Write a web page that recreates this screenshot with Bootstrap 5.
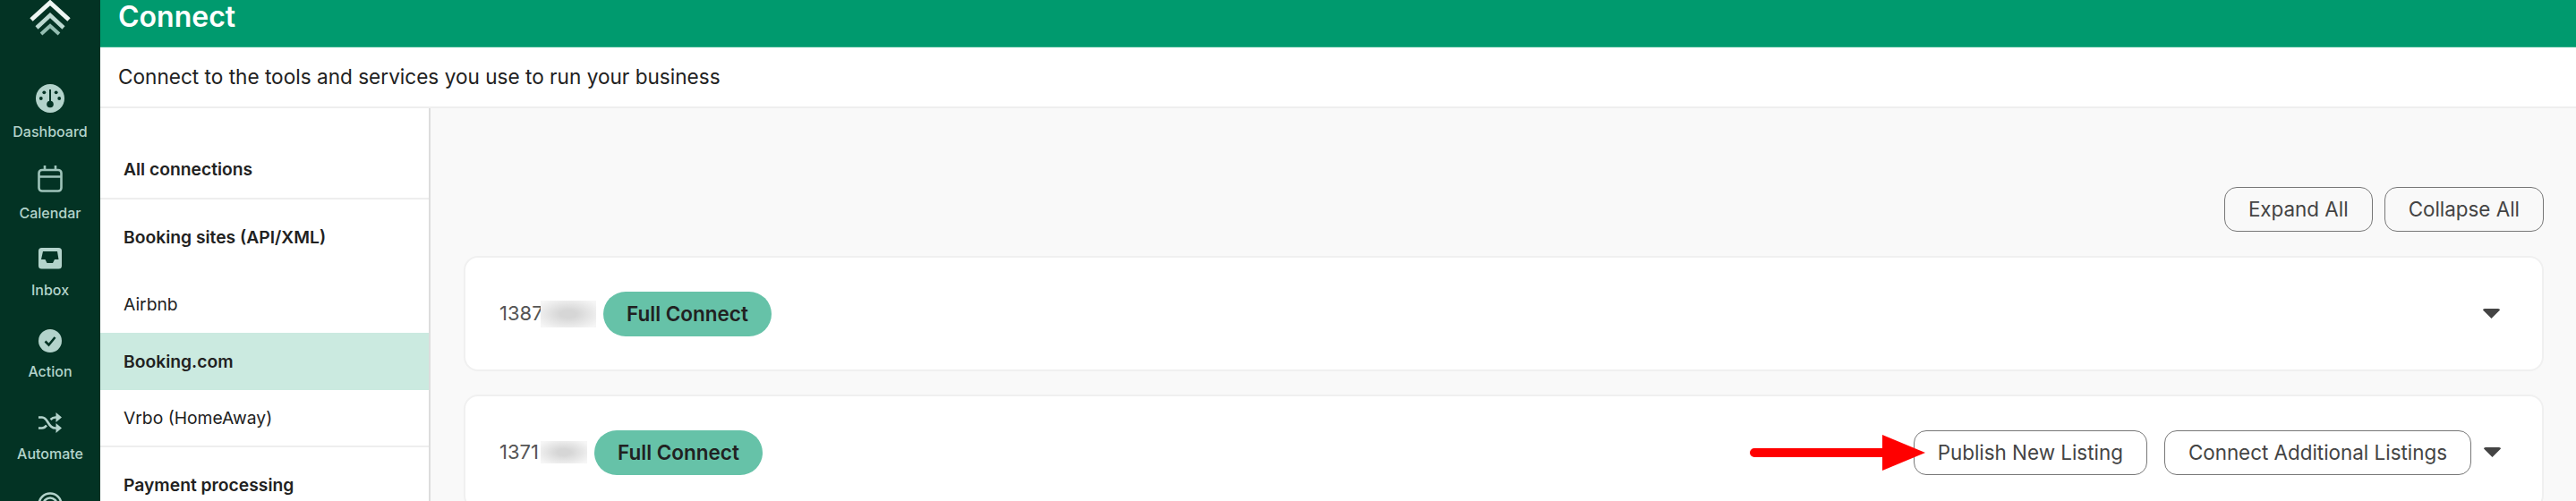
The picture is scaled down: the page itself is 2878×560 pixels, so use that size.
<!DOCTYPE html>
<html lang="en">
<head>
    <meta charset="UTF-8">
    <title>Connect</title>
    <link href="https://cdn.jsdelivr.net/npm/bootstrap@5.3.0/dist/css/bootstrap.min.css" rel="stylesheet">
    <style>
        html, body { height: 100%; overflow: hidden; }
        body { font-family: Inter, "Liberation Sans", sans-serif; color: #212121; background: #fff; }

        .side-rail { width: 112px; background: #033324; color: #b3d3cb; height: 560px; overflow: hidden; }
        .rail-logo { height: 40px; margin-bottom: 54px; }
        .rail-label { font-size: 16px; line-height: 20px; font-weight: 500; white-space: nowrap; }
        .rail-dash .rail-label { margin-top: 11px; }
        .rail-cal { margin-top: 28px; }
        .rail-cal .rail-label { margin-top: 13px; }
        .rail-inbox { margin-top: 29px; }
        .rail-inbox .rail-label { margin-top: 13px; }
        .rail-action { margin-top: 34px; }
        .rail-action .rail-label { margin-top: 11px; }
        .rail-auto { margin-top: 36px; }
        .rail-auto .rail-label { margin-top: 13px; }
        .rail-next { margin-top: 33px; }

        .top-bar { height: 53px; background: #009a6e; border-bottom: 1px solid #35b08c; color: #fff; padding-left: 20px; }
        .top-bar h1 { font-size: 32px; line-height: 38px; font-weight: 600; margin: 0; }
        .sub-bar { height: 68px; padding-left: 20px; font-size: 22.6px; border-bottom: 2px solid #eee; }

        .side-menu { width: 369px; border-right: 2px solid #ddd; font-size: 19.3px; }
        .menu-row { padding: 0 26px; display: flex; align-items: center; }
        .menu-all { height: 102px; padding-top: 36px; font-weight: 600; border-bottom: 2px solid #eee; }
        .menu-head { height: 85px; font-weight: 600; }
        .menu-link { height: 64px; }
        .menu-link.is-active { background: #cbeae0; font-weight: 600; }
        .menu-end { border-bottom: 2px solid #eee; }

        .main-pane { background: #f9f9f9; padding: 88px 36px 0 37px; overflow: hidden; }
        .pane-actions { gap: 13px; }
        .pane-btn { font-size: 22.4px; line-height: 30px; color: #444; border: 1px solid #777; border-radius: 14px; background: transparent; padding: 9px 26px; }
        .pane-btn:hover { color: #444; border-color: #777; }
        .conn-card { border: 2px solid #f0f0f0; border-radius: 16px; padding: 0 47px 0 38px; height: 129px; }
        .conn-first { margin-top: 27px; }
        .conn-second { margin-top: 26px; padding-right: 46px; }
        .conn-id { width: 46px; font-size: 22px; color: #555; white-space: nowrap; }
        .blur-patch { display: block; background: radial-gradient(ellipse at center, #d6d6d6 20%, #f6f6f6 90%); }
        .blur-wide { width: 62px; height: 30px; }
        .blur-short { width: 52px; height: 25px; }
        .type-pill { background: #66c2a8; color: #212121; border-radius: 26px; font-size: 22.5px; font-weight: 600; line-height: 50px; padding: 0 26px; }
        .caret-down { width: 19px; height: 11px; color: #444; }
        .caret-gap { margin-left: 14px; }
        .listing-gap { margin-left: 19px; }
        .red-arrow { right: 100%; top: 5px; margin-right: -13px; }
    </style>
</head>
<body>
    <div class="d-flex">
        <nav class="side-rail d-flex flex-column align-items-center flex-shrink-0">
            <div class="rail-logo">
                <svg width="46" height="40" viewBox="0 0 46 40" fill="none">
                    <path d="M2 22 23 3l21 19" stroke="#eef6f3" stroke-width="5"/>
                    <path d="M8 31 23 17l15 14" stroke="#bcd9d1" stroke-width="4.500"/>
                    <path d="M13 38 23 29l10 9" stroke="#93bdb1" stroke-width="4"/>
                </svg>
            </div>
            <div class="rail-dash d-flex flex-column align-items-center">
                <svg width="32" height="32" viewBox="0 0 32 32">
                    <circle cx="16" cy="16" r="16" fill="#b3d3cb"/>
                    <g fill="#033324">
                        <circle cx="9.3" cy="9.3" r="1.9"/>
                        <circle cx="22.7" cy="9.3" r="1.9"/>
                        <circle cx="5.8" cy="16" r="1.9"/>
                        <circle cx="26.2" cy="16" r="1.9"/>
                        <rect x="15" y="6" width="2" height="15"/>
                        <circle cx="16" cy="22.5" r="3.8"/>
                    </g>
                </svg>
                <span class="rail-label">Dashboard</span>
            </div>
            <div class="rail-cal d-flex flex-column align-items-center">
                <svg width="28" height="30" viewBox="0 0 28 30" fill="none" stroke="#9fc4ba" stroke-width="2.6">
                    <rect x="1.5" y="5" width="25" height="23.5" rx="3.5"/>
                    <path d="M1.5 12.5h25M8 0v5M20 0v5"/>
                </svg>
                <span class="rail-label">Calendar</span>
            </div>
            <div class="rail-inbox d-flex flex-column align-items-center">
                <svg width="26" height="24" viewBox="0 0 26 24">
                    <rect width="26" height="23.5" rx="3.5" fill="#b3d3cb"/>
                    <path d="M5 4h16l1.5 9h-4.500l-2 4H9.500l-2-4H3z" fill="#033324"/>
                </svg>
                <span class="rail-label">Inbox</span>
            </div>
            <div class="rail-action d-flex flex-column align-items-center">
                <svg width="26" height="26" viewBox="0 0 26 26">
                    <circle cx="13" cy="13" r="13" fill="#b3d3cb"/>
                    <path d="M7.500 13.500l4 4 7-8.500" fill="none" stroke="#033324" stroke-width="2.600"/>
                </svg>
                <span class="rail-label">Action</span>
            </div>
            <div class="rail-auto d-flex flex-column align-items-center">
                <svg width="26" height="23" viewBox="0 0 26 23" fill="none" stroke="#b3d3cb" stroke-width="2.600">
                    <path d="M0 5.500h4c3 0 4.500 2 6.500 5.500s4 6.500 8 6.500h2M0 17.500h4c2 0 3.500-1 5-3M13.500 8c1.800-1.800 3.500-2.500 5.500-2.500h2"/>
                    <path d="M19.500 0l6.500 5.500-6.500 5.500zM19.500 12l6.500 5.500-6.500 5.500z" fill="#b3d3cb" stroke="none"/>
                </svg>
                <span class="rail-label">Automate</span>
            </div>
            <div class="rail-next">
                <svg width="28" height="28" viewBox="0 0 28 28" fill="none" stroke="#b3d3cb" stroke-width="2.600">
                    <circle cx="14" cy="14" r="12.500"/>
                    <circle cx="14" cy="14" r="7.500"/>
                </svg>
            </div>
        </nav>

        <div class="flex-grow-1 d-flex flex-column vh-100 overflow-hidden">
            <header class="top-bar flex-shrink-0">
                <h1>Connect</h1>
            </header>
            <div class="sub-bar d-flex align-items-center flex-shrink-0">Connect to the tools and services you use to run your business</div>

            <div class="d-flex flex-grow-1 overflow-hidden">
                <aside class="side-menu flex-shrink-0">
                    <div class="menu-row menu-all">All connections</div>
                    <div class="menu-row menu-head">Booking sites (API/XML)</div>
                    <div class="menu-row menu-link">Airbnb</div>
                    <div class="menu-row menu-link is-active">Booking.com</div>
                    <div class="menu-row menu-link menu-end">Vrbo (HomeAway)</div>
                    <div class="menu-row menu-head">Payment processing</div>
                </aside>

                <main class="main-pane flex-grow-1">
                    <div class="d-flex justify-content-end pane-actions">
                        <button type="button" class="btn pane-btn">Expand All</button>
                        <button type="button" class="btn pane-btn">Collapse All</button>
                    </div>

                    <div class="conn-card conn-first bg-white d-flex align-items-center">
                        <span class="conn-id">1387</span>
                        <span class="blur-patch blur-wide"></span>
                        <span class="type-pill ms-2">Full Connect</span>
                        <svg class="caret-down ms-auto" viewBox="0 0 19 11"><path d="M0 1.500Q0 0 2 0h15q2 0 2 1.500L9.500 11z" fill="currentColor"/></svg>
                    </div>

                    <div class="conn-card conn-second bg-white d-flex align-items-center">
                        <span class="conn-id">1371</span>
                        <span class="blur-patch blur-short"></span>
                        <span class="type-pill ms-2">Full Connect</span>
                        <div class="ms-auto d-flex align-items-center position-relative">
                            <svg class="red-arrow position-absolute" width="196" height="40" viewBox="0 0 196 40">
                                <path d="M5 15h143V0l48 20-48 20V25H5a5 5 0 0 1 0-10z" fill="#f00"/>
                            </svg>
                            <button type="button" class="btn pane-btn">Publish New Listing</button>
                            <button type="button" class="btn pane-btn listing-gap">Connect Additional Listings</button>
                            <svg class="caret-down caret-gap" viewBox="0 0 19 11"><path d="M0 1.500Q0 0 2 0h15q2 0 2 1.500L9.500 11z" fill="currentColor"/></svg>
                        </div>
                    </div>
                </main>
            </div>
        </div>
    </div>

    <script src="https://cdn.jsdelivr.net/npm/bootstrap@5.3.0/dist/js/bootstrap.bundle.min.js"></script>
</body>
</html>
